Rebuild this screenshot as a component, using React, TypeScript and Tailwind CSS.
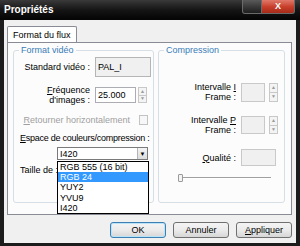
import React from "react";

const Spin = ({ h = "h-[16px]" }: { h?: string }) => (
  <div className={`flex flex-col ${h} w-[9px]`}>
    <div className="flex-1 border border-[#c8c8c8] bg-[#f4f4f4] flex items-center justify-center text-[5px] leading-none text-[#9a9a9a]">▲</div>
    <div className="flex-1 border border-t-0 border-[#c8c8c8] bg-[#f4f4f4] flex items-center justify-center text-[5px] leading-none text-[#9a9a9a]">▼</div>
  </div>
);

const Btn = ({ children, def = false }: { children: React.ReactNode; def?: boolean }) => (
  <div
    className={`w-[56px] h-[16px] rounded-[3px] border ${
      def ? "border-[#3c7fb1] shadow-[inset_0_0_0_1px_#b9e3f8]" : "border-[#707070]"
    } bg-gradient-to-b from-[#f4f4f4] via-[#ebebeb] to-[#d6d6d6] flex items-center justify-center text-[9px] text-black`}
  >
    {children}
  </div>
);

export default function App() {
  return (
    <div className="w-[300px] h-[246px] bg-[#1c1c1c] flex flex-col font-['Liberation_Sans',Arial,sans-serif] overflow-hidden">
      {/* title bar */}
      <div className="h-[20px] flex items-start bg-gradient-to-b from-[#3a3a3a] via-[#151515] to-[#050505]">
        <div className="pl-[4px] pt-[4px] text-[10px] font-bold text-white leading-[12px]">Propriétés</div>
        <div className="ml-auto mr-[5px] flex">
          <div className="w-[20px] h-[14px] rounded-bl-[3px] border border-[#6a6a6a] border-t-0 bg-gradient-to-b from-[#5a5a5a] to-[#1e1e1e]" />
          <div className="w-[33px] h-[14px] rounded-br-[3px] border border-l-0 border-t-0 border-[#6a6a6a] bg-gradient-to-b from-[#e0786a] via-[#c9412d] to-[#a52a17] flex items-center justify-center text-[9px] font-bold text-white leading-none">
            X
          </div>
        </div>
      </div>

      {/* client */}
      <div className="flex-1 mx-[4px] mb-[3px] bg-[#f0f0f0] flex flex-col pl-[3px] pr-[4px] text-[9px] leading-[10px] text-black">
        {/* tab header */}
        <div className="flex pt-[6px] h-[22px]">
          <div className="px-[5px] border border-b-0 border-[#898c95] bg-white flex items-center h-[16px] rounded-t-[2px]">
            Format du flux
          </div>
        </div>
        {/* tab page */}
        <div className="h-[173px] border border-[#898c95] bg-[#fcfcfc] flex gap-[4px] px-[5px] pt-[2px]">
          {/* format video */}
          <fieldset className="w-[141px] h-[158px] border border-[#d5dfe5] rounded-[3px] relative">
            <legend className="ml-[5px] px-[2px] text-[#3a7db8]">Format vidéo</legend>
            <div className="flex flex-col">
              <div className="flex items-center mt-[2px]">
                <div className="w-[76px] text-right">Standard vidéo :</div>
                <div className="ml-[5px] w-[56px] h-[20px] border border-[#b5b5b5] bg-[#f0f0f0] flex items-center pl-[2px]">PAL_I</div>
              </div>
              <div className="flex items-center mt-[8px]">
                <div className="w-[76px] text-right">
                  <span className="underline">F</span>réquence
                  <br />d'images :
                </div>
                <div className="ml-[5px] w-[41px] h-[16px] border border-[#abadb3] bg-white flex items-center pl-[2px]">25.000</div>
                <div className="ml-[2px]">
                  <Spin />
                </div>
              </div>
              <div className="flex items-center mt-[10px] justify-end pr-[5px]">
                <div className="text-[#a0a0a0]">
                  <span className="underline">R</span>etourner horizontalement
                </div>
                <div className="ml-[9px] w-[9px] h-[10px] border border-[#c3c3c3] bg-[#f7f7f7]" />
              </div>
              <div className="mt-[8px] pl-[6px] whitespace-nowrap tracking-[-0.25px]">
                <span className="underline">E</span>space de couleurs/compression :
              </div>
              <div className="flex mt-[4px] pl-[43px] relative">
                <div className="w-[91px] h-[13px] border border-[#7a7a7a] bg-white flex items-center">
                  <div className="flex-1 pl-[2px]">I420</div>
                  <div className="w-[10px] h-full border-l border-[#b5b5b5] bg-gradient-to-b from-[#f4f4f4] to-[#dcdcdc] flex items-center justify-center text-[6px]">▼</div>
                </div>
                {/* open list */}
                <div className="absolute left-[43px] top-[14px] w-[92px] border border-black bg-white z-10 flex flex-col leading-[10.2px]">
                  <div className="pl-[2px]">RGB 555 (16 bit)</div>
                  <div className="pl-[2px] bg-[#3399ff] text-white">RGB 24</div>
                  <div className="pl-[2px]">YUY2</div>
                  <div className="pl-[2px]">YVU9</div>
                  <div className="pl-[2px]">I420</div>
                </div>
              </div>
              <div className="mt-[5px] pl-[6px]">Taille de :</div>
            </div>
          </fieldset>

          {/* compression */}
          <fieldset className="w-[127px] h-[158px] border border-[#d5dfe5] rounded-[3px] relative">
            <legend className="ml-[5px] px-[2px] text-[#3a7db8]">Compression</legend>
            <div className="flex flex-col">
              <div className="flex items-center mt-[27px]">
                <div className="w-[77px] text-right leading-[10px]">
                  Intervalle <span className="underline">I</span>
                  <br />
                  Frame :
                </div>
                <div className="ml-[5px] w-[24px] h-[19px] border border-[#c9c9c9] bg-[#f0f0f0]" />
                <div className="ml-[4px]">
                  <Spin h="h-[19px]" />
                </div>
              </div>
              <div className="flex items-center mt-[13px]">
                <div className="w-[77px] text-right leading-[10px]">
                  Intervalle <span className="underline">P</span>
                  <br />
                  Frame :
                </div>
                <div className="ml-[5px] w-[24px] h-[18px] border border-[#c9c9c9] bg-[#f0f0f0]" />
                <div className="ml-[4px]">
                  <Spin h="h-[18px]" />
                </div>
              </div>
              <div className="flex items-center mt-[14px]">
                <div className="w-[77px] text-right">
                  <span className="underline">Q</span>ualité :
                </div>
                <div className="ml-[5px] w-[35px] h-[17px] border border-[#c9c9c9] bg-[#f0f0f0]" />
              </div>
              <div className="flex items-center mt-[8px] ml-[19px] w-[93px]">
                <div className="w-[5px] h-[8px] border border-[#9a9a9a] bg-[#f4f4f4] rounded-[1px]" />
                <div className="flex-1 h-[2px] border-t border-[#a0a0a0] border-b border-b-white" />
              </div>
            </div>
          </fieldset>
        </div>

        {/* buttons */}
        <div className="flex justify-end gap-[7px] mt-[7px]">
          <Btn def>OK</Btn>
          <Btn>Annuler</Btn>
          <Btn>
            <span className="underline">A</span>ppliquer
          </Btn>
        </div>
      </div>
    </div>
  );
}
